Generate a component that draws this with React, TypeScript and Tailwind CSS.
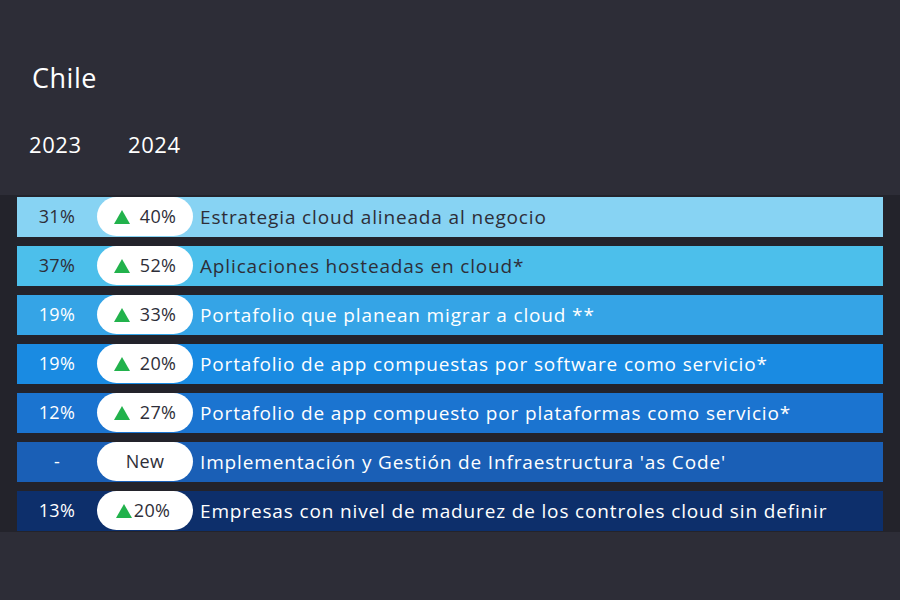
import React from "react";

type Row = { prev: string; cur: string; label: string; bg: string; dark: boolean; tight?: boolean; isNew?: boolean };

const rows: Row[] = [
  { prev: "31%", cur: "40%", label: "Estrategia cloud alineada al negocio", bg: "bg-[#87d3f3]", dark: true },
  { prev: "37%", cur: "52%", label: "Aplicaciones hosteadas en cloud*", bg: "bg-[#4cbfeb]", dark: true },
  { prev: "19%", cur: "33%", label: "Portafolio que planean migrar a cloud **", bg: "bg-[#35a4e6]", dark: false },
  { prev: "19%", cur: "20%", label: "Portafolio de app compuestas por software como servicio*", bg: "bg-[#1a8be2]", dark: false },
  { prev: "12%", cur: "27%", label: "Portafolio de app compuesto por plataformas como servicio*", bg: "bg-[#1b74d0]", dark: false },
  { prev: "-", cur: "New", label: "Implementación y Gestión de Infraestructura 'as Code'", bg: "bg-[#1a5fb6]", dark: false, isNew: true },
  { prev: "13%", cur: "20%", label: "Empresas con nivel de madurez de los controles cloud sin definir", bg: "bg-[#0d2f6b]", dark: false, tight: true },
];

function Tri() {
  return (
    <svg width="16" height="14" viewBox="0 0 16 14">
      <polygon points="8,0 16,14 0,14" fill="#22b24c" />
    </svg>
  );
}

export default function App() {
  return (
    <div className="w-[900px] h-[600px] bg-[#2d2d37] flex flex-col" style={{ fontFamily: "'Open Sans', sans-serif" }}>
      <div className="h-[195px] flex flex-col text-white">
        <div className="pl-[32px] pt-[59px] text-[27px] leading-[38px] tracking-[0.5px]">Chile</div>
        <div className="flex pl-[29px] pt-[32px] text-[22px] leading-[30px] tracking-[0.6px]">
          <span className="w-[99px]">2023</span>
          <span>2024</span>
        </div>
      </div>
      <div className="bg-[#23232b] pl-[17px] pt-[2px] pb-[1px] flex flex-col gap-[9.5px]">
        {rows.map((r, i) => (
          <div key={i} className={`w-[866px] h-[39.5px] flex items-center ${r.bg}`}>
            <div className={`w-[80px] text-center text-[18px] tracking-[0.4px] ${r.dark ? "text-[#2e2e38]" : "text-white"}`}>{r.prev}</div>
            <div className="w-[96px] h-[39px] bg-white rounded-full flex items-center justify-center text-[18px] tracking-[0.3px] text-[#2e2e38]">
              {r.isNew ? (
                <span>New</span>
              ) : (
                <span className={`flex items-center ${r.tight ? "gap-[2px] ml-[-4px]" : "gap-[10px]"}`}>
                  <Tri />
                  <span>{r.cur}</span>
                </span>
              )}
            </div>
            <div className={`pl-[7px] text-[19px] tracking-[0.85px] ${r.dark ? "text-[#2e2e38]" : "text-white"}`}>{r.label}</div>
          </div>
        ))}
      </div>
    </div>
  );
}
